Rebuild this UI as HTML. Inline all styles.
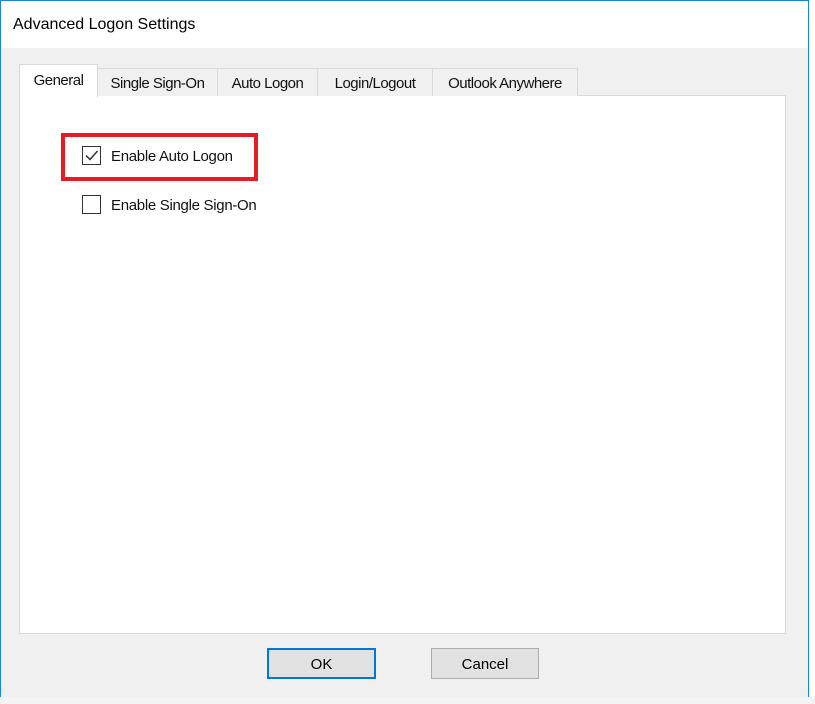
<!DOCTYPE html>
<html><head><meta charset="utf-8"><style>
*{margin:0;padding:0;box-sizing:border-box}
body{width:815px;height:704px;background:#f3f3f3;position:relative;overflow:hidden;font-family:"Liberation Sans",sans-serif;color:#000}
.win{position:absolute;left:0;top:0;width:809px;height:697px;border:1px solid #1883d7;border-bottom:none;background:#f0f0f0}
.title{position:absolute;left:0;top:0;width:807px;height:47px;background:#fff}
.title span{position:absolute;left:12px;top:15px;font-size:16px}
.right{position:absolute;left:809px;top:0;width:6px;height:697px;background:#fff}
.panel{position:absolute;left:19px;top:95px;width:767px;height:539px;background:#fff;border:1px solid #d9d9d9}
.tab{position:absolute;top:68px;height:28px;border:1px solid #d9d9d9;border-bottom:none;background:#f0f0f0;font-size:15px;text-align:center;line-height:29px;letter-spacing:-0.5px;color:#111}
.tab.sel{top:64px;height:33px;background:#fff;line-height:31px;z-index:2}
.cb{position:absolute;left:82px;width:19px;height:19px;border:1px solid #333;background:#fff}
.lbl{position:absolute;left:111px;font-size:15px;letter-spacing:-0.3px;color:#111}
.red{position:absolute;left:61px;top:133px;width:197px;height:48px;border:4px solid #e81b23}
.btn{position:absolute;top:648px;height:31px;background:#e1e1e1;border:1px solid #adadad;font-size:15px;text-align:center;line-height:31px}
</style></head><body>
<div class="win">
<div class="title"><span>Advanced Logon Settings</span></div>
</div>
<div class="right"></div>
<div class="panel"></div>
<div class="tab sel" style="left:19px;width:79px">General</div>
<div class="tab" style="left:97px;width:121px">Single Sign-On</div>
<div class="tab" style="left:217px;width:101px">Auto Logon</div>
<div class="tab" style="left:317px;width:116px">Login/Logout</div>
<div class="tab" style="left:432px;width:146px">Outlook Anywhere</div>
<div class="red"></div>
<div class="cb" style="top:146px"><svg width="17" height="17" viewBox="0 0 17 17"><path d="M3 8.5 L7 12.5 L14.5 4" fill="none" stroke="#333" stroke-width="1.5"/></svg></div>
<div class="lbl" style="top:148px">Enable Auto Logon</div>
<div class="cb" style="top:195px"></div>
<div class="lbl" style="top:197px">Enable Single Sign-On</div>
<div class="btn" style="left:267px;width:109px;border:2px solid #0078d7;line-height:29px">OK</div>
<div class="btn" style="left:431px;width:108px">Cancel</div>
</body></html>
